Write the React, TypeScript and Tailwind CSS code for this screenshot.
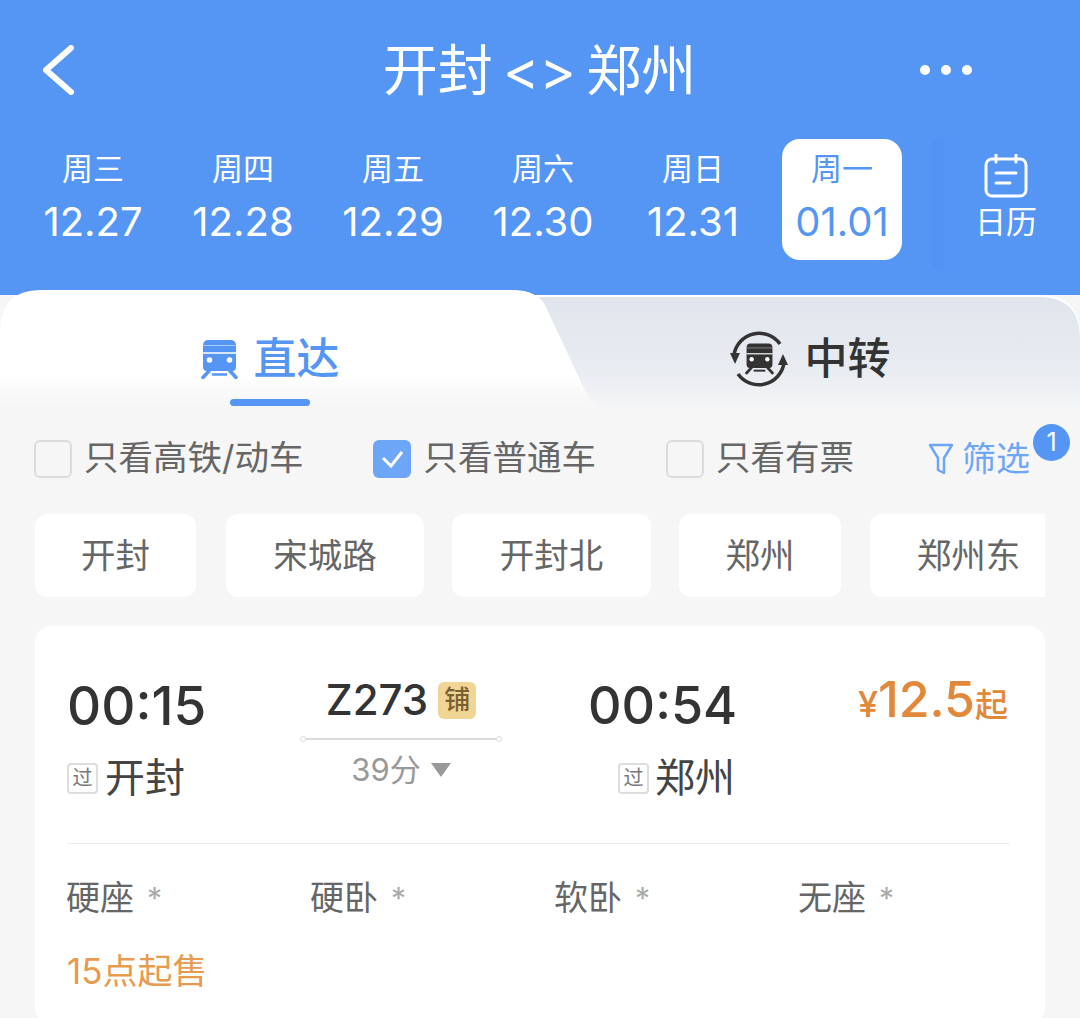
import React from "react";

const font = { fontFamily: 'Inter, "Noto Sans CJK SC", sans-serif' };

const days = [
  ["周三", "12.27"],
  ["周四", "12.28"],
  ["周五", "12.29"],
  ["周六", "12.30"],
  ["周日", "12.31"],
];

function Train({ color, className }: { color: string; className?: string }) {
  return (
    <svg viewBox="0 0 37 40" className={className} fill="none">
      <path d="M7 1h23a5 5 0 0 1 5 5v22a4 4 0 0 1-4 4H6a4 4 0 0 1-4-4V6a5 5 0 0 1 5-5z" fill={color} />
      <path d="M2 6.500h33" stroke="#fff" strokeWidth="1" opacity="0.5" />
      <path d="M2 14h33" stroke="#fff" strokeWidth="1.500" />
      <circle cx="8.500" cy="21" r="2.800" fill="#fff" />
      <circle cx="28.500" cy="21" r="2.800" fill="#fff" />
      <path d="M8 32 2 38.500M29 32l6 6.500" stroke={color} strokeWidth="3.500" strokeLinecap="round" />
      <path d="M11 35.500h15" stroke={color} strokeWidth="2.500" />
    </svg>
  );
}

function Check({ label, checked }: { label: string; checked?: boolean }) {
  return (
    <div className="flex items-center gap-[12px]">
      <div
        className={
          checked
            ? "flex h-[38px] w-[38px] items-center justify-center rounded-[6px] bg-[#6ea6f7]"
            : "h-[38px] w-[38px] rounded-[6px] border-2 border-[#dcdcdc] bg-[#f6f6f6]"
        }
      >
        {checked && (
          <svg viewBox="0 0 38 38" className="h-[38px] w-[38px]" fill="none">
            <path d="M10 18l8 8 11-14" stroke="#fff" strokeWidth="3" />
          </svg>
        )}
      </div>
      <span className="text-[34.500px] leading-none text-[#666666]">{label}</span>
    </div>
  );
}

function Station({ label, w }: { label: string; w: string }) {
  return (
    <div className={`flex h-[83px] shrink-0 items-center justify-center rounded-[12px] bg-white text-[34.500px] text-[#666666] ${w}`}>
      {label}
    </div>
  );
}

function Seat({ label }: { label: string }) {
  return (
    <div className="flex w-[244px] shrink-0 items-center text-[34px] leading-none text-[#666666]">
      {label}
      <span className="ml-[13px] text-[30px] text-[#aaaaaa]">*</span>
    </div>
  );
}

function TransferIcon() {
  return (
    <div className="relative h-[58px] w-[58px]">
      <svg viewBox="0 0 58 58" className="absolute inset-0 h-[58px] w-[58px]" fill="none" stroke="#333333" strokeWidth="3.500">
        <path d="M4 25A25.500 25.500 0 0 1 50 14" />
        <path d="M54 33A25.500 25.500 0 0 1 8 44" />
        <path d="M0 23h10l-5 11z" fill="#333333" stroke="none" />
        <path d="M48 35h10l-5-11z" fill="#333333" stroke="none" />
      </svg>
      <Train color="#333333" className="absolute left-[15px] top-[12px] h-[33px] w-[29px]" />
    </div>
  );
}

export default function App() {
  return (
    <div style={font} className="h-[1018px] w-[1080px] overflow-hidden bg-[#f6f6f6]">
      <div className="h-[295px] bg-[#5596f5] text-white">
        <div className="relative flex h-[139px] items-center justify-center pt-[2px]">
          <svg viewBox="0 0 36 50" className="absolute left-[40px] top-[45px] h-[50px] w-[36px]" fill="none">
            <path d="M31 3 6 25l25 22" stroke="#fff" strokeWidth="6" strokeLinecap="round" strokeLinejoin="round" />
          </svg>
          <div className="pr-[1px] text-[55px] leading-none [word-spacing:-5px]">开封 &lt;&gt; 郑州</div>
          <div className="absolute left-[920px] top-[65px] flex gap-[11px]">
            <div className="h-[10px] w-[10px] rounded-full bg-white" />
            <div className="h-[10px] w-[10px] rounded-full bg-white" />
            <div className="h-[10px] w-[10px] rounded-full bg-white" />
          </div>
        </div>
        <div className="flex h-[121px] pl-[18px]">
          {days.map(([d, n]) => (
            <div key={n} className="flex w-[150px] flex-col items-center pt-[14px]">
              <span className="text-[31px] leading-[32px]">{d}</span>
              <span className="mt-[14px] text-[40px] leading-[46px]">{n}</span>
            </div>
          ))}
          <div className="flex w-[148px] justify-center">
            <div className="flex w-[120px] flex-col items-center rounded-[18px] bg-white pt-[14px] text-[#5596f5]">
              <span className="text-[31px] leading-[32px]">周一</span>
              <span className="mt-[14px] text-[40px] leading-[46px]">01.01</span>
            </div>
          </div>
          <div className="ml-[16px] flex h-[130px] w-[148px] flex-col items-center bg-gradient-to-r from-[#5392f2] to-[#5596f5] to-20% pt-[15px]">
            <svg viewBox="0 0 44 44" className="h-[44px] w-[44px]" fill="none" stroke="#fff" strokeWidth="3">
              <rect x="2" y="5" width="40" height="37" rx="6" />
              <path d="M12 1v7M32 1v7" strokeLinecap="round" />
              <path d="M12 19h20M12 29h14" strokeLinecap="round" />
            </svg>
            <span className="mt-[7px] text-[31px] leading-[34px]">日历</span>
          </div>
        </div>
      </div>

      <div className="relative -mt-[5px] h-[115px]">
        <svg viewBox="0 0 1080 115" className="absolute inset-0 h-[115px] w-[1080px]" preserveAspectRatio="none">
          <defs>
            <linearGradient id="r" x1="0" y1="0" x2="0" y2="1">
              <stop offset="0" stopColor="#e0e5ed" />
              <stop offset="0.7" stopColor="#e9ecf1" />
              <stop offset="1" stopColor="#f3f4f6" />
            </linearGradient>
            <linearGradient id="l" x1="0" y1="0" x2="0" y2="1">
              <stop offset="0" stopColor="#ffffff" />
              <stop offset="0.72" stopColor="#ffffff" />
              <stop offset="1" stopColor="#f6f6f6" />
            </linearGradient>
          </defs>
          <path d="M500 5h540q40 0 40 40v70H500z" fill="#fff" />
          <path d="M500 7h540q38 0 40 38v70H500z" fill="url(#r)" />
          <path d="M0 115V40Q2 0 40 0h475q22 1 30 15l42 90q5 8 14 10z" fill="url(#l)" />
        </svg>
        <div className="relative flex h-full">
          <div className="relative flex w-[540px] items-center justify-center pt-[22px]">
            <Train color="#5596f5" className="h-[40px] w-[37px]" />
            <span className="ml-[16px] text-[43px] font-medium leading-none text-[#5596f5]">直达</span>
            <div className="absolute bottom-[-1px] left-[230px] h-[7px] w-[80px] rounded-full bg-[#5596f5]" />
          </div>
          <div className="flex flex-1 items-center justify-center pt-[22px]">
            <TransferIcon />
            <span className="ml-[17px] text-[43px] font-medium leading-none text-[#333333]">中转</span>
          </div>
        </div>
      </div>

      <div className="relative flex h-[109px] items-center pb-[2px] pl-[34px]">
        <Check label="只看高铁/动车" />
        <div className="ml-[70px]"><Check label="只看普通车" checked /></div>
        <div className="ml-[70px]"><Check label="只看有票" /></div>
        <div className="ml-[74px] flex items-center gap-[8px] text-[34px] leading-none text-[#6ea6f7]">
          <svg viewBox="0 0 26 34" className="h-[34px] w-[26px]" fill="none" stroke="#6ea6f7" strokeWidth="2.500" strokeLinejoin="round">
            <path d="M2 3h22l-8 13v15l-6-3V16z" />
          </svg>
          筛选
        </div>
        <div className="absolute left-[1033px] top-[19px] flex h-[37px] w-[37px] items-center justify-center rounded-full bg-[#5596f5] text-[25px] leading-none text-white">1</div>
      </div>

      <div className="flex pl-[35px]">
        <Station label="开封" w="w-[161px]" />
        <Station label="宋城路" w="ml-[30px] w-[198px]" />
        <Station label="开封北" w="ml-[28px] w-[199px]" />
        <Station label="郑州" w="ml-[28px] w-[162px]" />
        <div className="ml-[29px] flex h-[83px] w-[175px] shrink-0 items-center justify-center rounded-l-[12px] bg-white pl-[22px] text-[34.500px] text-[#666666]">
          郑州东
        </div>
      </div>

      <div className="mx-[35px] mt-[29px] h-[398px] rounded-[16px] bg-white pl-[32px] pr-[35px] pt-[45px]">
        <div className="relative h-[173px] border-b border-[#ececec]">
          <div className="absolute left-0 top-[2px] text-[53px] font-medium leading-[66px] text-[#333333]">00:15</div>
          <div className="absolute left-0 top-[84px] flex items-center">
            <span className="flex h-[31px] w-[31px] items-center justify-center rounded-[4px] border-2 border-[#dddddd] text-[20px] leading-none text-[#777777]">过</span>
            <span className="ml-[7px] text-[40px] leading-[46px] text-[#444444]">开封</span>
          </div>

          <div className="absolute left-[234px] top-[3px] flex w-[200px] flex-col items-center">
            <div className="flex h-[52px] items-center">
              <span className="text-[42px] font-medium leading-none text-[#333333]">Z273</span>
              <span className="ml-[10px] flex h-[37px] w-[38px] items-center justify-center rounded-[6px] bg-[#f0d595] text-[26px] font-medium leading-none text-[#7a6030]">铺</span>
            </div>
            <div className="relative mt-[12px] h-[2px] w-[200px] bg-[#dcdcdc]">
              <div className="absolute -left-[1px] -top-[2px] h-[6px] w-[6px] rounded-full border border-[#dcdcdc] bg-white" />
              <div className="absolute -right-[1px] -top-[2px] h-[6px] w-[6px] rounded-full border border-[#dcdcdc] bg-white" />
            </div>
            <div className="mt-[12px] flex items-center text-[31px] leading-[36px] text-[#999999]">
              39分
              <svg viewBox="0 0 20 14" className="ml-[10px] h-[14px] w-[20px]"><path d="M0 0h20L10 14z" fill="#999999" /></svg>
            </div>
          </div>

          <div className="absolute left-[521px] top-[2px] text-[52px] font-medium leading-[66px] text-[#333333]">00:54</div>
          <div className="absolute left-[551px] top-[84px] flex items-center">
            <span className="flex h-[31px] w-[31px] items-center justify-center rounded-[4px] border-2 border-[#dddddd] text-[20px] leading-none text-[#777777]">过</span>
            <span className="ml-[6px] text-[40px] leading-[46px] text-[#444444]">郑州</span>
          </div>

          <div className="absolute right-[2px] top-[3px] flex h-[52px] items-baseline text-[#e2883a]">
            <span className="text-[36px] font-medium leading-none">¥</span>
            <span className="text-[50px] font-medium leading-none">12.5</span>
            <span className="text-[33px] font-medium leading-none">起</span>
          </div>
        </div>
        <div className="-ml-[1px] flex pt-[37px]">
          <Seat label="硬座" />
          <Seat label="硬卧" />
          <Seat label="软卧" />
          <Seat label="无座" />
        </div>
        <div className="mt-[39px] text-[35px] leading-none text-[#e89a4f]">15点起售</div>
      </div>
    </div>
  );
}
